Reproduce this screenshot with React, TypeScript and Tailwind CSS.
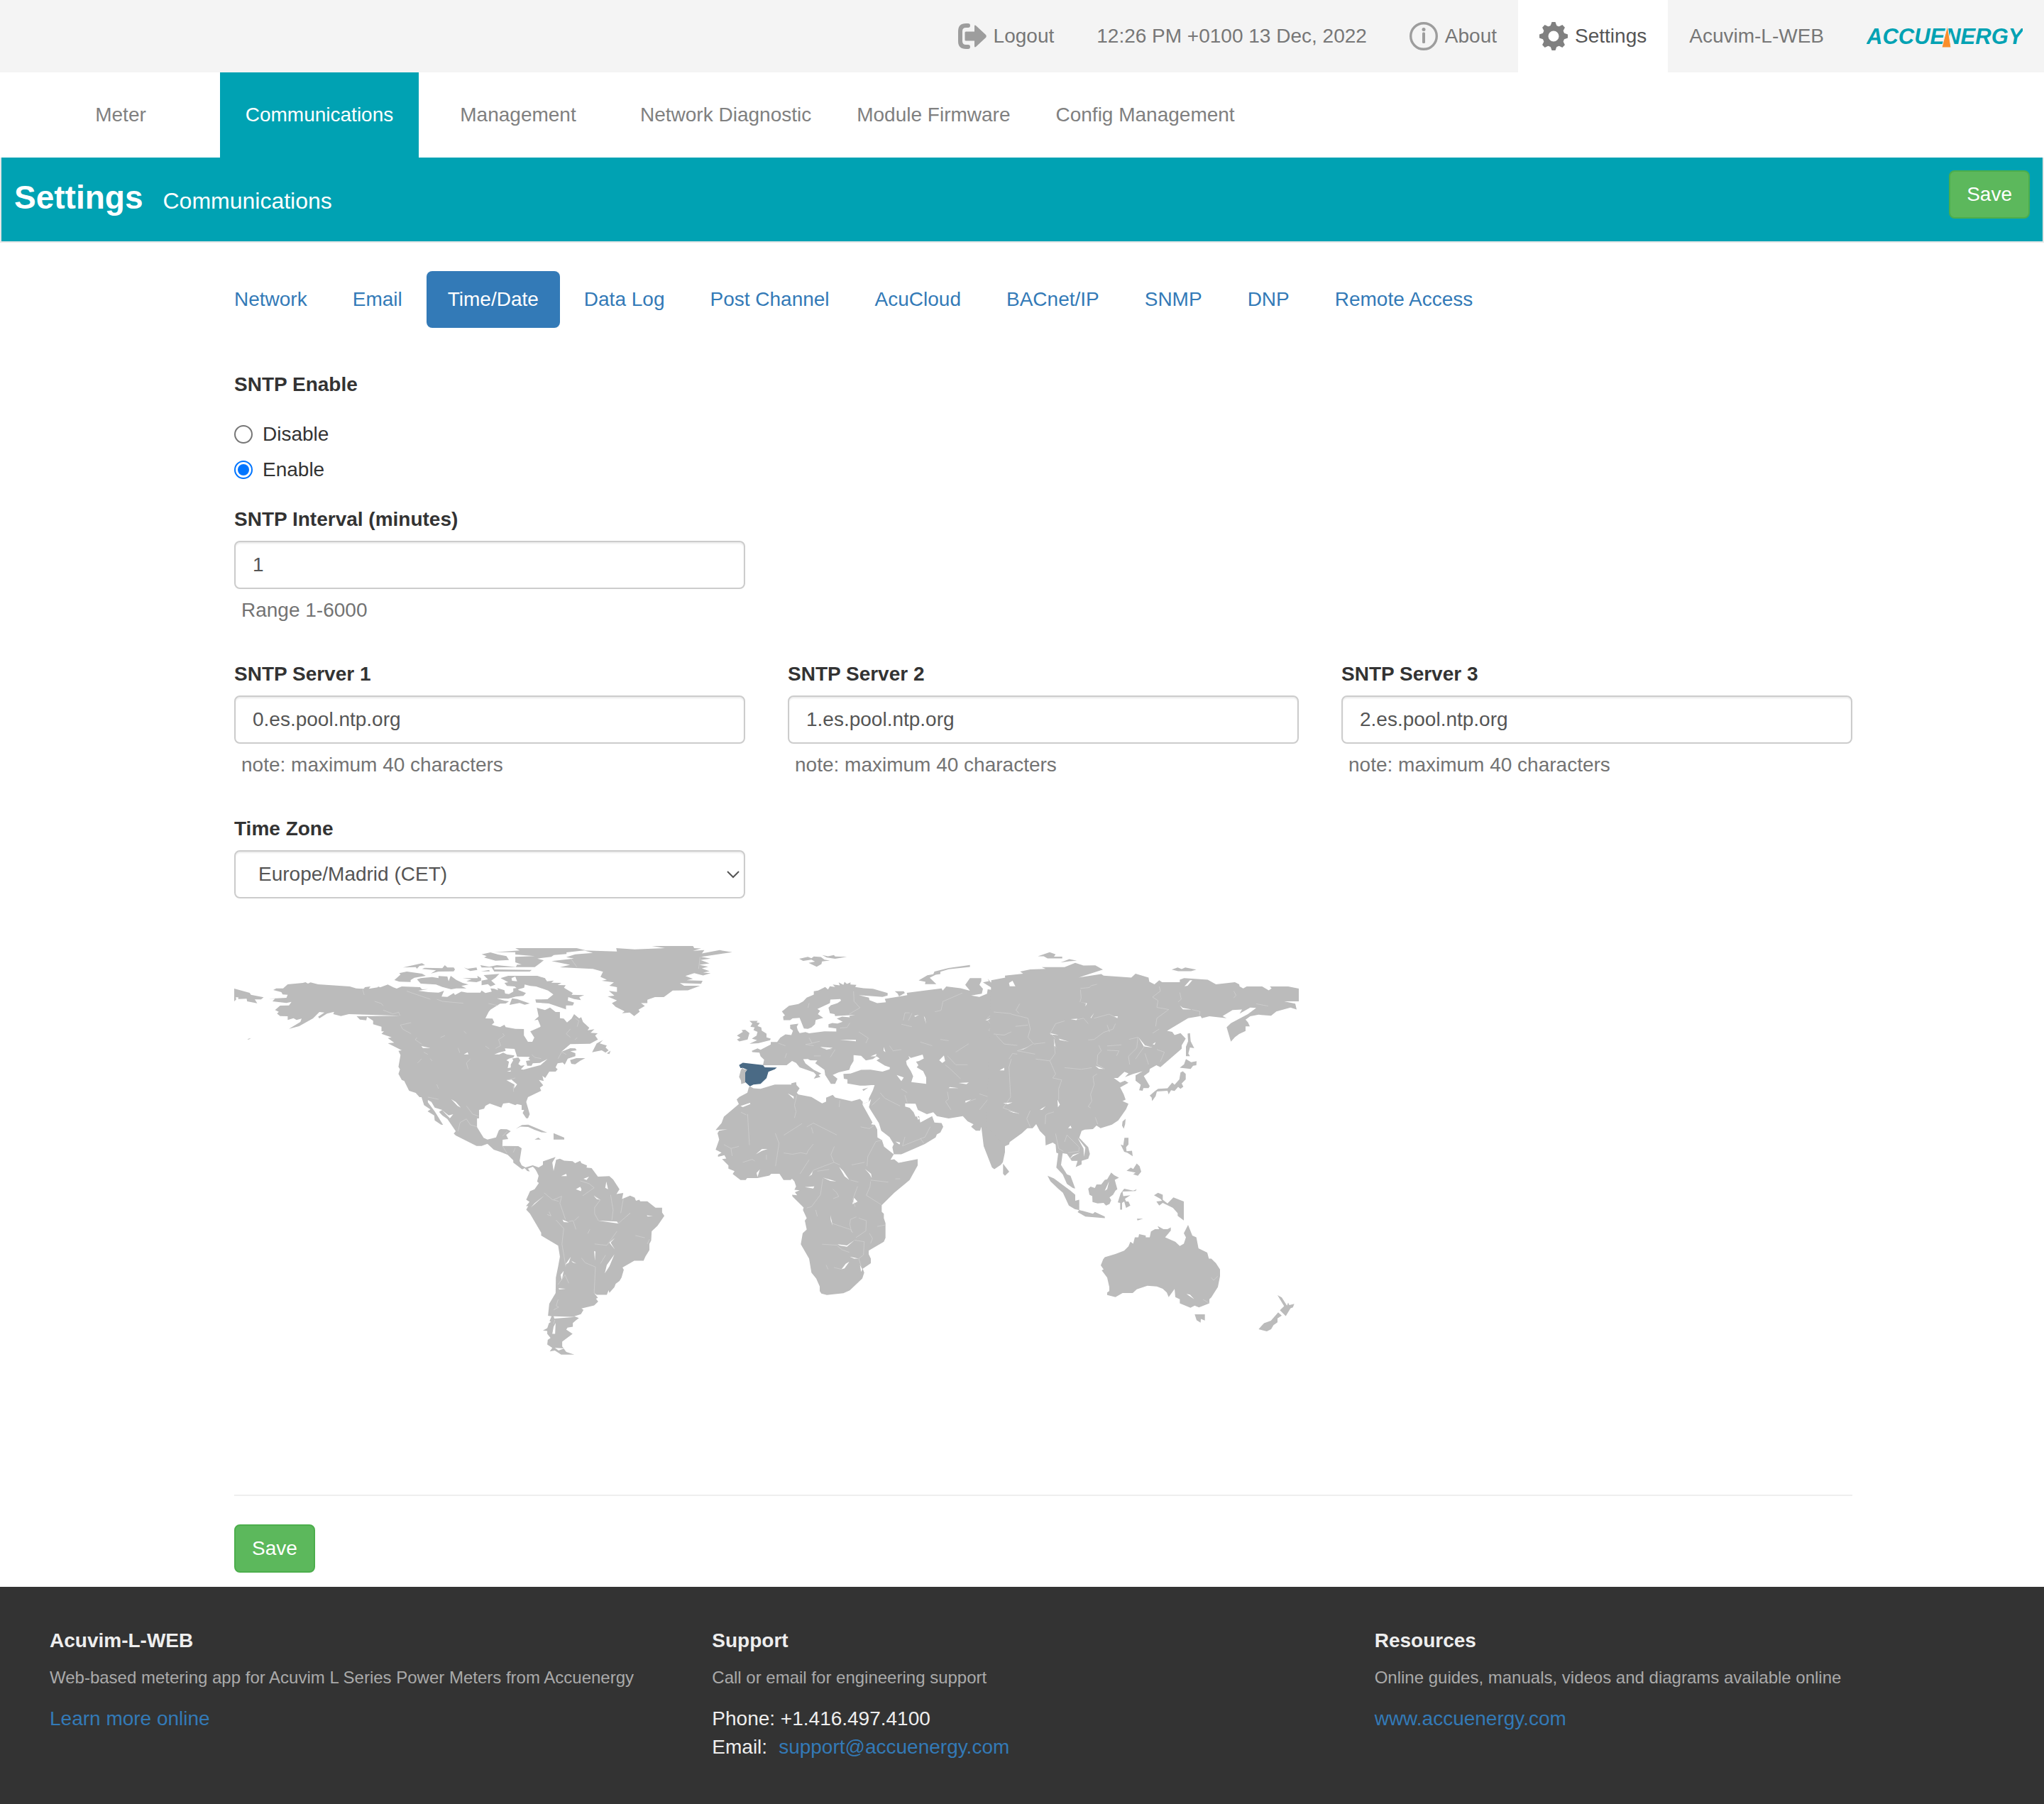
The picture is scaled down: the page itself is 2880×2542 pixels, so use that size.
"use client";

import { useState } from "react";

const mainNav = ["Meter", "Communications", "Management", "Network Diagnostic", "Module Firmware", "Config Management"];

const tabs = ["Network", "Email", "Time/Date", "Data Log", "Post Channel", "AcuCloud", "BACnet/IP", "SNMP", "DNP", "Remote Access"];

const inputClass =
  "block h-[68px] w-full rounded-lg border-2 border-[#ccc] bg-white px-6 text-[28px] leading-10 text-[#555] shadow-[inset_0_2px_2px_rgba(0,0,0,0.075)] outline-none focus:border-[#66afe9]";

function LogoutIcon() {
  return (
    <svg width="40" height="36" viewBox="0 0 40 36" fill="#9d9d9d" aria-hidden="true">
      <path d="M14 3H11Q3 3 3 11V25Q3 33 11 33H14" fill="none" stroke="#9d9d9d" strokeWidth="6" strokeLinecap="round" />
      <path d="M11 11.500H23V4Q23 1.500 25.500 3.500L39 16Q40.500 18 39 20L25.500 32.500Q23 34.500 23 32V24.500H11Q9.500 24.500 9.500 23V13Q9.500 11.500 11 11.500Z" />
    </svg>
  );
}

function InfoIcon() {
  return (
    <svg width="40" height="40" viewBox="0 0 40 40" aria-hidden="true">
      <circle cx="20" cy="20" r="18.300" fill="none" stroke="#9d9d9d" strokeWidth="3.400" />
      <circle cx="20" cy="10.500" r="2.500" fill="#9d9d9d" />
      <rect x="18" y="14.500" width="4" height="15.500" rx="1.500" fill="#9d9d9d" />
    </svg>
  );
}

const gearTeeth = [0, 45, 90, 135, 180, 225, 270, 315];

function GearIcon() {
  return (
    <svg width="40" height="40" viewBox="0 0 40 40" fill="#808080" aria-hidden="true">
      <circle cx="20" cy="20" r="11.500" fill="none" stroke="#808080" strokeWidth="8" />
      {gearTeeth.map((angle) => (
        <path key={angle} d="M17.500 0H22.500L25 7H15Z" transform={`rotate(${angle} 20 20)`} />
      ))}
    </svg>
  );
}

function Logo() {
  return (
    <svg width="220" height="40" viewBox="0 0 220 40" role="img" aria-label="Accuenergy">
      <text x="0" y="31" fill="#00a2b3" fontFamily="Liberation Sans, Arial, sans-serif" fontSize="31" fontWeight="700" fontStyle="italic">
        ACCUENERGY
      </text>
      <path d="M114 5L119 36H106Z" fill="#f98e2b" stroke="#f4f4f4" />
    </svg>
  );
}

// Land outlines, grouped by region. Every group carries its own units.
function WorldMap() {
  return (
    <svg className="block h-auto w-full" viewBox="330 1316 1500 604" fill="#bbb" aria-label="World time zones" role="img">
      {/* North America */}
      <g transform="translate(300 1310) scale(.357143 .333333)">
        <path d="M238 255L250 248L277 248L295 231L355 225L365 222L375 228L385 223L415 231L540 240L565 248L595 250L600 243L622 240L615 250L650 244L652 240L660 244L690 232L712 244L725 249L745 240L817 243L825 252L849 251L810 258L850 264L890 266L912 258L907 270L902 283L925 284L950 268L955 276L980 262L1003 266L1055 266L1060 257L1075 268L1100 262L1095 248L1110 250L1125 256L1122 247L1150 256L1153 270L1168 272L1185 262L1185 248L1205 245L1205 255L1235 268L1225 280L1195 283L1165 292L1120 290L1150 300L1168 303L1155 312L1133 313L1095 338L1088 347L1075 375L1103 376L1110 392L1100 402L1133 412L1150 402L1155 412L1193 419L1227 420L1227 447L1243 474L1260 474L1268 456L1252 430L1290 412L1293 409L1282 380L1268 383L1285 367L1278 330L1310 340L1330 329L1352 348L1369 348L1369 374L1384 376L1397 392L1415 376L1425 357L1445 375L1453 370L1460 390L1485 415L1478 425L1505 421L1490 436L1518 438L1508 448L1519 464L1488 482L1410 484L1375 516L1410 501L1430 502L1435 510L1410 514L1430 522L1430 535L1400 545L1388 571L1380 562L1360 565L1352 582L1360 590L1352 600L1327 600L1311 627L1300 618L1305 640L1286 635L1303 658L1290 668L1295 681L1243 708L1236 728L1250 780L1243 797L1236 797L1222 775L1228 762L1218 762L1218 742L1200 737L1193 742L1168 732L1145 735L1138 752L1092 735L1075 745L1070 757L1050 762L1050 797L1042 798L1042 835L1068 880L1083 887L1117 878L1128 848L1135 843L1160 844L1175 852L1157 868L1165 885L1143 888L1142 914L1205 915L1218 924L1210 978L1218 996L1233 1005L1262 996L1285 1005L1290 1030L1262 1002L1243 1010L1250 1022L1240 1020L1230 1008L1220 1013L1185 985L1185 975L1163 952L1135 940L1108 930L1083 905L1060 914L1040 914L958 870L950 862L958 852L925 800L905 785L892 770L905 762L875 752L862 728L848 720L848 730L875 768L908 825L900 824L875 806L873 785L847 768L858 760L833 742L823 708L815 708L800 690L774 681L755 640L745 635L732 610L738 590L732 580L740 530L732 512L745 510L690 480L715 478L690 458L705 455L665 440L675 430L665 430L665 410L632 400L632 385L608 368L605 383L580 380L567 366L738 364L536 357L505 365L475 357L478 347L450 355L420 375L415 368L440 350L420 348L395 375L340 408L300 419L345 390L350 376L330 382L318 374L295 382L295 366L265 365L253 355L260 347L245 340L265 321L300 320L310 305L290 310L235 303L245 292L220 292L290 288L295 275L275 274L270 264Z" />
        <path d="M1135 205L1165 195L1280 195L1310 205L1318 218L1345 215L1335 224L1375 225L1360 234L1392 235L1385 245L1395 252L1420 268L1415 275L1465 277L1445 285L1452 298L1425 293L1402 285L1400 300L1425 308L1420 320L1393 320L1393 337L1325 312L1275 308L1272 295L1320 294L1343 274L1322 257L1275 240L1252 238L1230 232L1228 245L1205 252L1190 240L1160 238L1150 225L1165 222Z" />
        <path d="M1110 95L1210 88L1193 78L1435 78L1470 87L1395 96L1395 103L1345 107L1335 115L1280 122L1305 130L1270 158L1195 158L1200 148L1218 148L1193 138L1193 115L1270 112L1193 105L1193 95Z" />
        <path d="M1060 104L1095 96L1125 105L1158 112L1168 128L1115 131L1070 118L1080 112Z" />
        <path d="M716 213L740 190L735 184L765 177L825 186L840 195L795 203L780 213L780 221L735 220Z" />
        <path d="M805 210L820 205L865 200L890 205L890 196L925 198L930 218L938 195L960 212L985 225L1008 232L980 238L1000 248L960 248L940 252L905 242L880 232L820 228Z" />
        <path d="M750 160L825 142L837 150L815 153L805 165L800 158Z" />
        <path d="M825 166L835 161L905 163L915 150L925 160L950 160L955 168L950 176L890 177L860 185L880 172Z" />
        <path d="M990 160L1005 165L1040 160L1043 170L1015 175Z" />
        <path d="M1055 150L1090 157L1120 150L1200 158L1110 160L1110 168L1258 170L1250 177L1110 177L1100 160L1060 160Z" />
        <path d="M1058 176L1090 170L1092 176Z" />
        <path d="M985 205L1045 205L1043 195L1058 205L1058 215L1040 222L1000 218L1020 210Z" />
        <path d="M1060 235L1060 215L1085 210L1068 192L1130 187L1115 203L1098 215L1115 232L1095 240L1085 230Z" />
        <path d="M1170 318L1180 290L1200 293L1250 312L1230 317L1210 310Z" />
        <path d="M84 249L145 267L150 275L200 286L190 295L165 295L175 311L135 303L133 292L100 293L100 286L90 286L92 295L84 303Z" />
        <path d="M135 463L150 458L142 464Z" />
        <path
          fill="#fff"
          d="M1110 527L1128 520L1155 512L1152 502L1190 504L1200 537L1250 538L1245 545L1252 552L1235 555L1240 575L1257 575L1262 565L1290 563L1320 547L1293 572L1258 582L1225 592L1215 590L1230 573L1215 575L1205 568L1213 552L1205 540L1180 545L1185 552L1175 570L1175 583L1163 585L1168 558L1158 552L1168 545L1185 540L1190 532L1160 527L1145 520L1130 527Z M1158 636L1178 634L1200 654L1188 672L1190 655Z M822 492L838 496L858 500L828 500Z M990 527L1005 518L1008 527Z M940 716L958 728L978 752L965 745Z M903 762L930 785L948 780L935 797Z M1160 600L1175 595L1175 600Z M1178 205L1193 198L1200 218L1180 216Z"
        />
        <path
          fill="none"
          stroke="#d2d2d2"
          strokeWidth="2"
          d="M590 250L597 276M638 303L664 312L672 322M672 340L710 356L733 349L738 364M765 260L858 294M883 294L905 303L988 311M1087 312L1125 321M782 393L740 403L748 420L782 440M805 456L798 465L824 484M898 456L916 447M990 429L1000 439M967 500L974 520M1143 438L1150 448L1127 465L1135 490L1115 502M1075 492L1090 504M832 518L848 527M807 564L823 546M857 545L865 555M1016 546L1000 563L1007 590M883 654L890 672M848 708L890 717M1000 745L1025 780L1050 789M967 852L975 815L1000 800L1016 825L1042 833M1193 627L1160 636M1185 660L1186 685M1258 528L1270 540L1295 545M1376 517L1362 545M1376 517L1394 527M1430 375L1444 385L1437 410M1410 420L1394 440L1410 455M1437 457L1428 465M1143 915L1160 945M1193 922L1185 942M1162 852L1143 872"
        />
      </g>

      {/* Greenland, Caribbean and South America */}
      <g transform="translate(680 1310) scale(.357143 .395408)">
        <path d="M272 112L360 103L330 98L365 88L435 83L400 74L530 78L527 66L600 70L720 66L668 58L830 58L835 66L862 67L830 75L875 73L865 85L935 73L985 80L862 97L900 103L860 108L895 120L855 125L890 132L865 138L895 148L870 153L900 155L870 163L835 155L800 165L830 175L805 180L868 182L862 193L778 190L795 200L858 200L810 216L750 217L715 240L680 240L650 250L650 262L625 262L640 272L615 285L620 292L598 308L580 295L550 298L560 291L525 275L510 262L530 252L493 238L520 235L498 218L530 222L530 205L500 200L518 188L470 182L490 178L465 168L475 150L435 140L305 134L345 125Z" />
        <path d="M432 437L450 405L475 393L462 405L490 413L485 420L497 430L485 438L470 430Z M490 441L505 431L500 443Z" />
        <path d="M345 465L370 458L405 458L385 467L365 480L350 478Z" />
        <path d="M130 710L155 696L180 695L255 723L232 722L205 713L180 703L150 702Z" />
        <path d="M280 725L322 741L322 748L280 748Z M205 748L220 741L230 748Z" />
        <path d="M238 826L288 810L275 830L280 860L290 820L305 816L322 823L355 825L365 832L385 824L390 832L412 840L410 848L430 850L455 880L500 878L515 890L540 925L528 942L555 938L550 960L582 948L600 955L605 966L618 962L622 968L650 968L682 991L708 991L708 1008L717 1020L690 1055L667 1075L665 1108L658 1120L658 1142L642 1165L635 1180L598 1180L552 1204L557 1212L548 1240L540 1252L525 1262L520 1274L500 1294L497 1285L490 1301L450 1301L440 1295L455 1312L447 1315L456 1325L440 1339L390 1350L398 1355L388 1370L362 1378L380 1384L368 1392L356 1402L356 1415L335 1418L330 1425L355 1440L314 1468L314 1485L330 1505L362 1514L310 1514L285 1500L265 1503L275 1490L255 1478L257 1462L268 1455L255 1440L255 1430L238 1428L255 1420L262 1402L270 1398L264 1395L272 1378L258 1376L263 1333L288 1295L289 1240L298 1200L305 1165L298 1126L231 1090L231 1080L187 1012L172 998L180 985L171 985L185 970L172 962L187 932L205 925L222 903L215 898L221 877L213 862L205 850L220 848L238 838Z" />
        <path
          fill="#fff"
          d="M280 1378L366 1380L283 1386Z M275 1440L280 1415L288 1402L286 1440Z M285 1490L322 1492L300 1500Z M190 990L243 948L205 975Z M310 878L330 870L332 878Z M385 916L390 925L388 932L368 925Z M438 948L464 963L450 960Z M455 1037L530 1040L535 1047Z M500 1115L522 1098L505 1115L522 1140Z M482 1225L490 1195L520 1157L500 1200Z M440 1145L445 1147L443 1180Z M398 888L420 880L410 892Z M484 920L488 898L495 925Z M308 1230L320 1216L312 1250Z M315 1033L340 1043L320 1042Z M300 1278L328 1280L302 1282Z M325 1195L348 1166L340 1186Z M350 1180L370 1190L356 1186Z M648 1018L672 1022L650 1022Z"
        />
        <path
          fill="none"
          stroke="#d2d2d2"
          strokeWidth="2"
          d="M348 103L372 133M858 97L852 140M280 962L312 950L305 975L327 1033M243 938L275 962L300 968M262 1005L270 1020L255 1015M290 1035L320 1065L313 1120L328 1200M340 1040L357 1037L368 1068M362 1037L380 1022M395 948L440 920L420 905L385 895M440 948L464 963L442 990L442 1012L457 1037M505 945L515 1000L510 1035M535 1047L582 1010L570 1020M555 960L545 1010M423 1068L415 1083M442 1120L490 1125L530 1075M390 1170L405 1187L445 1202L440 1295M485 1160L465 1190M603 1090L640 1098M658 1103L650 1120M340 1260L325 1230L297 1265M298 1318L290 1340L300 1345L280 1355M285 1390L280 1405"
        />
      </g>

      {/* Europe, Africa and West Asia */}
      <g transform="translate(980 1320) scale(.333333 .357143)">
        <path d="M230 590L245 598L275 600L335 583L405 583L405 578L425 573L427 585L440 598L428 615L435 622L490 632L535 657L552 650L552 635L580 624L590 634L660 649L695 640L707 651L706 662L748 733L742 740L758 742L768 760L769 792L788 802L797 828L838 858L824 880L840 878L858 892L939 877L939 902L905 960L840 1010L787 1059L787 1085L796 1093L796 1110L803 1130L803 1188L796 1203L732 1238L732 1252L741 1270L741 1288L707 1310L713 1325L705 1348L652 1395L625 1406L555 1413L532 1408L525 1398L525 1380L510 1348L490 1325L480 1270L445 1213L453 1170L470 1155L462 1120L470 1110L454 1078L457 1068L410 1025L408 1018L430 1020L420 1008L440 1000L418 998L425 985L418 965L408 955L402 960L372 960L355 935L320 935L312 942L262 952L218 952L212 960L190 960L157 936L165 925L139 915L139 902L112 877L130 875L122 862L95 868L95 860L110 852L85 840L100 800L93 775L100 765L85 762L110 735L120 710L183 660L174 642L185 632L219 615L225 595Z" />
        <path d="M238 450L262 440L275 446L318 425L318 415L345 415L358 398L380 385L405 388L412 370L400 362L400 347L435 343L428 355L432 368L440 380L465 376L480 381L545 373L595 374L595 362L562 358L562 345L578 340L600 342L622 335L597 323L620 315L652 318L650 312L675 308L590 313L588 305L568 302L562 280L572 270L600 262L615 252L612 246L570 248L568 262L515 285L527 292L517 305L540 320L508 328L505 345L490 358L475 363L458 362L440 320L410 322L400 329L372 329L370 315L378 310L365 295L395 272L435 265L455 255L470 240L500 228L500 215L518 212L548 198L560 208L568 195L590 198L580 188L610 192L605 180L625 190L630 178L640 186L655 180L655 188L680 190L675 198L710 203L750 205L812 222L812 232L790 237L690 230L733 240L735 250L768 262L805 258L800 245L865 235L895 230L893 221L968 212L1040 204L1045 212L1060 196L1120 203L1160 213L1140 190L1160 163L1208 163L1208 175L1200 190L1215 205L1210 225L1165 232L1200 237L1232 225L1235 207L1258 210L1265 220L1280 208L1250 200L1215 180L1240 175L1235 165L1248 180L1300 187L1290 178L1310 165L1308 155L1420 145L1420 740L1380 775L1328 810L1325 820L1308 826L1308 850L1299 890L1290 900L1263 917L1253 910L1218 826L1208 750L1203 765L1185 765L1165 750L1175 740L1150 728L1130 708L1070 717L1020 708L1005 692L978 700L940 683L930 659L886 658L886 670L905 675L922 692L930 710L945 708L950 733L1000 708L1010 733L1040 735L1047 750L1035 772L1020 780L1015 792L968 818L870 858L838 858L832 830L838 818L820 790L785 765L775 735L740 683L733 682L706 660L733 650L733 638L750 605L757 585L742 585L718 587L695 587L642 579L642 563L627 560L625 541L655 540L700 525L740 524L790 532L820 523L822 515L800 508L765 488L778 480L765 472L750 482L720 488L700 470L668 467L668 490L655 510L650 525L628 530L605 535L580 545L600 560L590 580L572 580L548 545L545 525L500 495L475 482L455 483L465 500L500 525L532 540L520 545L528 553L500 560L510 545L500 535L440 515L425 498L408 490L385 507L285 507L290 485L275 472L270 457L240 455Z" />
        <path d="M228 332L263 332L258 338L272 340L262 352L278 358L280 370L300 382L300 397L318 402L315 408L265 420L228 422L260 408L238 402L258 390L262 375L245 368L250 358L232 355L240 342Z" />
        <path d="M175 390L200 375L195 368L210 367L228 380L220 405L185 413L175 405L190 398Z" />
        <path d="M438 87L475 79L490 85L500 78L530 80L545 90L568 94L535 97L532 108L512 118L478 103L505 98L490 90L455 95Z M535 72L560 77L585 72L590 78L640 79L590 87L555 82Z" />
        <path d="M943 172L980 152L1005 148L1010 137L1070 123L1160 111L1160 119L1070 128L1035 138L1035 147L1015 150L990 162L1018 187L970 187L972 178Z M842 215L880 215L885 222L860 235L855 225Z" />
        <path d="M705 602L730 595L718 603L710 608Z M1300 895L1326 927L1308 943L1300 935Z" />
        <path
          fill="#fff"
          d="M890 490L905 480L900 470L910 478L960 465L965 480L945 490L932 493L942 507L935 515L962 530L975 555L975 580L912 573L920 550L910 530L893 505Z M1030 487L1050 468L1055 490L1043 498Z M706 660L728 683L740 683L733 672L742 640L733 650Z M610 406L678 407L678 412Z M607 908L625 925L650 960L630 945Z M715 915L742 935L745 952L735 935Z M255 858L280 838L305 837L280 845Z M262 948L258 932L272 918Z M538 950L595 965L570 963Z M462 988L502 985L498 993Z M570 1098L580 1140L572 1120Z M600 1213L640 1218L672 1197L640 1223L610 1218Z M617 1312L635 1290L650 1282L630 1308Z M190 668L230 655L232 660L200 672Z M390 618L415 630L415 640Z M845 808L865 812L862 820Z M480 945L495 925L492 938Z M85 762L135 760L100 765Z M663 1055L670 1030L685 1045Z M850 545L880 555L870 570Z M740 472L765 462L762 472Z M475 487L515 488L505 500Z M527 435L580 438L555 446Z M1075 593L1112 597L1070 597Z M1112 577L1155 575L1145 582Z M1328 185L1338 176L1345 195L1328 194Z M652 1262L690 1270L670 1270Z M695 1295L705 1312L700 1322Z M1225 330L1250 320L1235 330Z M925 312L945 308L928 316Z M965 312L975 345L970 320Z M795 435L803 455L795 450Z M1140 648L1165 642L1142 655Z M935 705L948 718L940 722Z"
        />
        <path
          fill="none"
          stroke="#d2d2d2"
          strokeWidth="2"
          d="M220 700L228 822M192 692L215 703M428 625L418 665L425 690L418 715M450 737L373 783M470 750L498 735L597 782M490 752L497 775M337 775L353 815L338 905M373 853L410 858L445 852L470 857L475 845L498 818M587 827L572 860L585 890M120 820L150 835L155 865M150 835L183 827M200 890L240 878L250 885M300 860L300 880M480 880L442 935M610 900L585 890L500 920L480 945M515 925L565 918M610 645L607 672M698 750L735 757L758 742M790 802L762 808L728 868L725 905M660 900L715 890M655 960L688 968M740 960L815 968M845 955L865 955M740 965L738 985L722 1020L785 1057M538 955L528 1018L490 1065L470 1070M580 995L597 1010L605 1025L582 1033M685 985L665 1035L675 1065M508 1078L515 1103M575 1130L655 1155L665 1168M680 1105L655 1115L652 1135L660 1165M690 1110L722 1120L720 1160L678 1187M735 1170L748 1190L740 1210M768 1143L803 1137M535 1213L600 1217M672 1197L713 1203L710 1255L690 1270L700 1300M600 1220L620 1235L650 1245M585 1305L617 1312M552 1295L560 1312M668 215L670 255L695 280L650 305M480 262L475 280M1128 222L1046 255L1038 290L1012 296M878 330L885 300L905 300M900 330L915 302M870 345L915 355M1228 327L1262 297L1365 300M1235 330L1252 350L1240 370L1275 388L1300 420L1350 420M1275 385L1310 375L1335 382M820 430L835 450L870 445M950 415L1000 430M1035 405L1070 410M1100 455L1155 422M1065 470L1100 505L1150 505M1055 505L1075 520L1120 560M780 615L800 637L865 668M870 600L895 615M885 625L895 655M1065 612L1070 640L1057 650L1080 683M1138 655L1185 640M1200 683L1243 633L1200 620M1330 515L1335 580L1325 600L1335 650M1332 460L1330 515M1300 675L1370 700M480 398L492 420L465 425L500 430M492 420L525 412M540 440L575 445M570 475L590 445M500 470L530 470M385 460L378 478M350 420L380 430M885 790L875 825L970 790L992 750M950 795L965 815M780 635L745 665M690 375L730 400L720 420M652 340L640 358L610 360"
        />
      </g>

      {/* Spain in the current zone, Portugal beside it */}
      <g transform="translate(980 1320) scale(.333333 .357143)">
        <path fill="#4a6a85" d="M184 506L200 497L285 506L293 515L344 516L335 523L308 533L300 558L275 580L245 583L230 590L210 573L210 535L218 524L200 517L190 518Z" />
        <path d="M192 524L200 517L203 522L218 524L210 535L210 576L193 581L192 567L184 553Z" />
      </g>

      {/* East Asia and Oceania */}
      <g transform="translate(1400 1320) scale(.333333 .382653)">
        <path d="M-10 160L50 150L48 143L125 136L112 128L155 120L220 118L203 112L300 112L345 96L380 106L430 105L462 121L360 150L455 137L465 143L582 150L600 136L655 150L658 165L680 175L700 160L712 167L787 167L787 158L805 152L905 158L940 175L1020 167L1038 175L1040 183L1055 190L1070 183L1135 183L1163 197L1175 190L1168 183L1245 183L1290 191L1290 238L1228 238L1275 246L1281 268L1255 261L1195 275L1173 291L1120 287L1085 293L1065 305L1075 315L1083 330L1065 330L1065 347L1038 358L1020 370L1003 386L985 333L1003 318L1075 285L1110 262L1085 261L1040 283L1050 268L1010 270L968 292L985 300L912 293L880 300L875 292L822 300L733 346L755 350L765 362L790 355L812 375L795 400L795 412L705 480L688 473L660 487L658 498L635 513L660 550L655 557L633 557L630 567L615 565L622 545L600 530L600 510L630 495L590 505L555 517L570 503L553 497L525 520L508 520L535 537L555 530L570 538L535 555L550 580L558 600L545 605L570 615L560 635L527 676L500 692L452 705L435 695L420 708L385 710L372 715L362 740L400 775L407 800L400 817L372 825L372 838L347 848L355 825L330 825L310 800L292 797L285 840L310 875L325 880L345 927L335 925L310 910L292 875L265 850L273 798L265 795L262 765L250 758L220 768L218 735L195 715L180 690L165 705L140 705L130 710L65 755L48 770L-30 700Z" />
        <path d="M820 357L830 355L833 385L848 410L830 408L823 430L830 440L813 440L813 405L822 385Z M813 450L835 462L858 458L857 473L843 475L833 487L787 482L805 470Z" />
        <path d="M800 495L812 505L812 525L795 540L802 552L790 560L780 553L765 568L750 565L740 580L735 567L690 570L685 587L670 605L668 592L660 585L680 570L695 560L735 558L755 537L765 545L785 525L790 500Z" />
        <path d="M558 670L556 690L550 707L543 695L545 680Z M553 740L570 740L570 765L560 775L562 790L585 788L588 808L565 795L552 792L537 765L548 768Z" />
        <path d="M605 835L617 845L624 865L610 880L590 875L600 868L562 862L580 850L590 855Z" />
        <path d="M228 880L255 890L325 935L345 950L345 972L362 968L362 1007L343 1003L318 990L293 943L273 928L240 900Z M362 1006L420 1020L428 1013L470 1030L470 1036L388 1030L355 1014Z" />
        <path d="M400 928L410 920L428 925L435 912L455 912L470 895L480 893L497 868L510 878L530 887L512 895L523 930L515 935L505 950L490 960L497 970L490 984L475 990L465 980L440 982L418 977L417 955L405 950Z" />
        <path d="M552 928L590 935L605 930L600 936L545 938L548 955L578 952L555 965L560 975L570 975L578 990L560 998L552 975L543 980L543 1005L535 1005L535 980L525 978L537 945Z M606 1038L632 1038L608 1045Z" />
        <path d="M678 952L695 943L715 950L715 968L735 982L760 960L804 975L804 1045L778 1028L778 1018L758 998L715 980L700 990L688 975L712 972L705 965Z" />
        <path d="M453 1210L463 1188L470 1180L515 1168L552 1156L570 1140L578 1123L590 1130L597 1107L612 1107L615 1095L643 1100L643 1107L660 1107L665 1085L682 1077L700 1077L693 1065L718 1077L735 1077L749 1070L749 1082L725 1107L768 1123L787 1139L804 1130L813 1107L804 1092L822 1061L840 1100L857 1107L866 1147L903 1163L910 1185L920 1185L940 1202L957 1225L957 1250L948 1290L920 1328L912 1335L912 1350L868 1365L850 1358L832 1366L787 1350L787 1335L768 1327L765 1297L740 1327L732 1310L715 1296L690 1288L650 1285L605 1298L588 1312L545 1312L515 1327L480 1319L480 1310L489 1305L489 1290L480 1255L457 1228L465 1225Z" />
        <path d="M850 1390L893 1390L893 1413L876 1407L875 1421L858 1412Z" />
        <path d="M1200 1320L1218 1328L1240 1358L1245 1347L1250 1356L1271 1352L1265 1365L1255 1368L1235 1397L1210 1375L1228 1360Z M1203 1383L1218 1395L1200 1405L1200 1420L1183 1430L1173 1445L1155 1453L1120 1445L1143 1423L1172 1414Z" />
        <path d="M187 72L237 57L262 65L255 73L290 73L290 80L228 80L212 72Z M283 95L320 82L352 88L320 90Z M753 121L778 113L795 119L810 113L857 121L835 127L780 127Z" />
        <path
          fill="#fff"
          d="M65 170L80 162L92 182L68 182Z M612 370L640 400L672 408L635 404Z M807 182L830 160L840 160L820 180Z M787 253L800 262L838 268L800 267Z M238 355L275 362L242 360Z M275 375L318 386L280 380Z M325 303L355 302L350 307Z M367 240L395 245L388 257L390 245Z M410 298L425 280L412 300Z M508 293L525 293L523 300Z M112 417L148 405L125 415Z M255 375L262 405L270 408L255 402Z M195 637L220 624L205 637Z M270 600L280 618L272 628Z M315 705L325 695L330 705Z M355 740L388 777L382 810L380 780Z M40 612L80 610L60 617Z M60 640L108 650L85 648Z M470 935L488 900L480 930Z M430 475L465 487L445 486Z M320 820L335 803L365 795L335 808Z M815 1315L830 1318L848 1335Z M25 492L45 482L45 492Z M672 395L685 388L680 398Z"
        />
        <path
          fill="none"
          stroke="#d2d2d2"
          strokeWidth="2"
          d="M367 190L405 187L412 180L437 175M367 195L370 225L365 240M700 183L705 200L672 222L695 235L690 260L740 268L690 300L685 330M787 205L793 230L780 240M838 268L872 275L870 292M1015 200L1025 215L1015 225M1110 247L1160 255M0 277L75 283M110 247L95 270L108 283M75 285L145 300L155 340L145 370L170 395L218 390M92 330L145 325M0 358L45 362L75 350M10 362L45 395L100 400M165 395L135 410L100 420L175 432M65 450L80 430L100 432M75 450L65 480L72 590L40 630L108 652M178 450L238 457L262 505L250 520L288 527L275 560L275 600M238 457L260 430L255 375M262 375L240 355L262 320L300 310M355 305L380 300L400 320M425 300L488 285L520 298M480 325L490 350M515 320L505 340L465 352L425 378L400 380M300 482L370 488L415 482M437 505L420 515L425 545L410 580L415 605L400 625L410 630M445 400L455 420L440 435L437 470L470 487M480 402L540 398M480 418L530 420L520 438M572 378L610 370L605 410L570 440L575 470M600 450L640 400M672 355L700 340M690 415L722 425L705 460M640 430L655 470M220 657L228 652L255 645M220 657L218 690M300 755L310 730L362 775L360 790L315 795M155 640L140 670L155 700M262 725L275 780L295 790M430 665L440 690M920 1255L930 1265L948 1250M885 1335L912 1350"
        />
      </g>
    </svg>
  );
}

type TextFieldProps = {
  id: string;
  label: string;
  initial: string;
  note: string;
};

function TextField({ id, label, initial, note }: TextFieldProps) {
  return (
    <div>
      <label htmlFor={id} className="mb-2.5 block font-bold">
        {label}
      </label>
      <input id={id} type="text" defaultValue={initial} className={inputClass} />
      <p className="mt-2.5 pl-2.5 text-[#737373]">{note}</p>
    </div>
  );
}

const radioClass =
  "size-[26px] appearance-none rounded-full border-2 border-[#767676] bg-white bg-clip-content p-[3px] checked:border-[#0075ff] checked:bg-[#0075ff]";

function SaveButton() {
  return (
    <button type="button" className="h-[68px] rounded-lg border-2 border-[#4cae4c] bg-[#5cb85c] px-[23px] text-white hover:bg-[#449d44]">
      Save
    </button>
  );
}

export default function App() {
  const [sntp, setSntp] = useState("enable");

  return (
    <div className="flex min-h-screen flex-col bg-white font-['Liberation_Sans',Arial,sans-serif] text-[28px] leading-10 text-[#333]">
      <header>
        <div className="flex h-[102px] items-stretch justify-end bg-[#f4f4f4] text-[#777]">
          <a href="#logout" className="flex items-center gap-2.5 px-[30px]">
            <LogoutIcon />
            Logout
          </a>
          <span className="flex items-center px-[30px]">12:26 PM +0100 13 Dec, 2022</span>
          <a href="#about" className="flex items-center gap-2.5 px-[30px]">
            <InfoIcon />
            About
          </a>
          <a href="#settings" className="flex items-center gap-2.5 bg-white px-[30px] text-[#555]">
            <GearIcon />
            Settings
          </a>
          <a href="#device" className="flex items-center px-[30px]">
            Acuvim-L-WEB
          </a>
          <a href="#home" className="flex items-center px-[30px]">
            <Logo />
          </a>
        </div>

        <nav className="flex pl-[30px] text-[#808080]">
          {mainNav.map((item) => (
            <a
              key={item}
              href="#nav"
              className={
                item === "Communications"
                  ? "min-w-[280px] bg-[#00a2b3] px-8 py-10 text-center text-white"
                  : item.includes(" ")
                    ? "px-8 py-10 text-center"
                    : "min-w-[280px] px-8 py-10 text-center"
              }
            >
              {item}
            </a>
          ))}
        </nav>

        <div className="flex h-[120px] items-start justify-between border-x-2 border-b-2 border-[#e7e7e7] bg-[#00a2b3] px-[18px] pt-[18px] text-white">
          <h1 className="flex items-baseline gap-7 text-[46px] leading-[76px] font-bold">
            Settings
            <small className="text-[32px] font-normal">Communications</small>
          </h1>
          <SaveButton />
        </div>
      </header>

      <main className="flex-1 pt-10 pr-[270px] pb-5 pl-[330px]">
        <nav className="-ml-[30px] flex gap-1 text-[#337ab7]">
          {tabs.map((tab) => (
            <a
              key={tab}
              href="#tab"
              className={tab === "Time/Date" ? "rounded-lg bg-[#337ab7] px-[30px] py-5 text-white" : "px-[30px] py-5"}
            >
              {tab}
            </a>
          ))}
        </nav>

        <form className="mt-[60px]">
          <fieldset>
            <legend className="font-bold">SNTP Enable</legend>
            <div className="mt-[30px] flex flex-col items-start gap-2.5">
              <label className="flex items-center gap-3.5">
                <input
                  type="radio"
                  name="sntp"
                  value="disable"
                  checked={sntp === "disable"}
                  onChange={() => setSntp("disable")}
                  className={radioClass}
                />
                Disable
              </label>
              <label className="flex items-center gap-3.5">
                <input
                  type="radio"
                  name="sntp"
                  value="enable"
                  checked={sntp === "enable"}
                  onChange={() => setSntp("enable")}
                  className={radioClass}
                />
                Enable
              </label>
            </div>
          </fieldset>

          <div className="mt-[30px] grid grid-cols-3 gap-x-[60px] gap-y-[50px]">
            <div className="col-span-3 grid grid-cols-3 gap-[60px]">
              <TextField id="interval" label="SNTP Interval (minutes)" initial="1" note="Range 1-6000" />
            </div>
            <TextField id="server1" label="SNTP Server 1" initial="0.es.pool.ntp.org" note="note: maximum 40 characters" />
            <TextField id="server2" label="SNTP Server 2" initial="1.es.pool.ntp.org" note="note: maximum 40 characters" />
            <TextField id="server3" label="SNTP Server 3" initial="2.es.pool.ntp.org" note="note: maximum 40 characters" />
            <div>
              <label htmlFor="timezone" className="mb-2.5 block font-bold">
                Time Zone
              </label>
              <div className="relative">
                <select
                  id="timezone"
                  defaultValue="Europe/Madrid"
                  className="block h-[68px] w-full appearance-none rounded-lg border-2 border-[#ccc] bg-white px-8 text-[28px] leading-10 text-[#555] shadow-[inset_0_2px_2px_rgba(0,0,0,0.075)] outline-none"
                >
                  <option value="Europe/Madrid">Europe/Madrid (CET)</option>
                </select>
                <svg
                  className="pointer-events-none absolute top-7 right-2"
                  width="18"
                  height="12"
                  viewBox="0 0 18 12"
                  fill="none"
                  stroke="#555"
                  strokeWidth="2"
                  aria-hidden="true"
                >
                  <path d="M1 2L9 10L17 2" />
                </svg>
              </div>
            </div>
            <div className="col-span-2 col-start-1">
              <WorldMap />
            </div>
          </div>

          <hr className="mt-[186px] mb-10 border-t-2 border-[#eee]" />
          <SaveButton />
        </form>
      </main>

      <footer className="grid grid-cols-3 bg-[#333] px-10 pt-14 pb-[60px] text-[#eee]">
        <section className="px-[30px]">
          <h5 className="font-bold">Acuvim-L-WEB</h5>
          <p className="mt-3 mb-[18px] text-2xl leading-10 text-[#aaa]">
            Web-based metering app for Acuvim L Series Power Meters from Accuenergy
          </p>
          <a href="#learn" className="text-[#337ab7]">
            Learn more online
          </a>
        </section>
        <section className="px-[30px]">
          <h5 className="font-bold">Support</h5>
          <p className="mt-3 mb-[18px] text-2xl leading-10 text-[#aaa]">Call or email for engineering support</p>
          <p>Phone: +1.416.497.4100</p>
          <p className="flex gap-4">
            Email:
            <a href="#email" className="text-[#337ab7]">
              support@accuenergy.com
            </a>
          </p>
        </section>
        <section className="px-[30px]">
          <h5 className="font-bold">Resources</h5>
          <p className="mt-3 mb-[18px] text-2xl leading-10 text-[#aaa]">
            Online guides, manuals, videos and diagrams available online
          </p>
          <a href="#site" className="text-[#337ab7]">
            www.accuenergy.com
          </a>
        </section>
      </footer>
    </div>
  );
}
